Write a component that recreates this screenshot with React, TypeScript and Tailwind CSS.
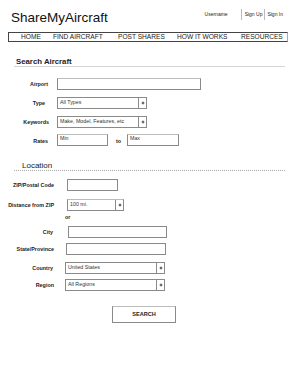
import React from "react";

const Plus = () => (
  <svg width="4" height="4" viewBox="0 0 4 4">
    <path d="M2 0.5V3.5M0.5 2H3.5" stroke="#333" strokeWidth="0.7" />
    <rect x="1.5" y="1.5" width="1" height="1" fill="#111" />
  </svg>
);

function Select({ w, text, extra = "" }: { w: string; text: string; extra?: string }) {
  return (
    <div className={`${w} h-[12px] flex border border-[#8a8a8a] bg-white ${extra}`}>
      <div className="flex-1 flex items-center pl-[2px] text-[5.3px] text-[#333] leading-none">{text}</div>
      <div className="w-[8px] border-l border-[#8a8a8a] flex items-center justify-center">
        <Plus />
      </div>
    </div>
  );
}

function Input({ w, text = "", extra = "" }: { w: string; text?: string; extra?: string }) {
  return (
    <div className={`${w} h-[12px] border border-[#8a8a8a] bg-white flex items-start pt-[1px] pl-[2px] text-[5.3px] text-[#333] leading-none ${extra}`}>
      {text}
    </div>
  );
}

export default function App() {
  return (
    <div className="w-[298px] h-[386px] bg-white overflow-hidden font-['Liberation_Sans',Arial,sans-serif] text-[#222]">
      {/* header */}
      <div className="h-[32px] flex justify-between">
        <div className="pl-[11px] pt-[10px] text-[13.5px] leading-[16px] text-[#111]">ShareMyAircraft</div>
        <div className="flex items-start pt-[9px] pr-[15px] text-[5px] text-[#222]">
          <div className="h-[11px] flex items-center pr-[13px]">Username</div>
          <div className="h-[11px] flex items-center border-l border-[#bbb] pl-[3px] pr-[2px]">Sign Up</div>
          <div className="h-[11px] flex items-center border-l border-[#bbb] pl-[2px]">Sign In</div>
        </div>
      </div>
      {/* nav */}
      <div className="ml-[8px] w-[280px] h-[10px] border border-[#444] border-r-[#aaa] flex items-center text-[6.6px] leading-none text-[#222]">
        <span className="ml-[12px] w-[32px]">HOME</span>
        <span className="w-[65px]">FIND AIRCRAFT</span>
        <span className="w-[59px]">POST SHARES</span>
        <span className="w-[64px]">HOW IT WORKS</span>
        <span>RESOURCES</span>
      </div>

      {/* Search Aircraft */}
      <div className="mt-[15px] ml-[14px] w-[271px] border-b border-[#d4d4d4] pl-[2px] font-bold text-[7.8px] leading-[9px] text-[#222]">
        Search Aircraft
      </div>

      <div className="mt-[11px] flex items-center h-[12px]">
        <div className="w-[48px] text-right font-bold text-[5.4px]">Airport</div>
        <Input w="w-[144px]" extra="ml-[9px] border-t-[#bbb]" />
      </div>
      <div className="mt-[7px] flex items-center h-[12px]">
        <div className="w-[45px] text-right font-bold text-[5.4px]">Type</div>
        <Select w="w-[90px]" text="All Types" extra="ml-[12px]" />
      </div>
      <div className="mt-[7px] flex items-center h-[12px]">
        <div className="w-[49px] text-right font-bold text-[5.4px]">Keywords</div>
        <Select w="w-[90px]" text="Make, Model, Features, etc" extra="ml-[8px]" />
      </div>
      <div className="mt-[6px] flex items-center h-[12px]">
        <div className="w-[48px] text-right font-bold text-[5.4px] pt-[2px]">Rates</div>
        <Input w="w-[51px]" text="Min" extra="ml-[9px] border-t-[#bbb]" />
        <div className="ml-[8px] w-[11px] font-bold text-[5.4px] pt-[2px]">to</div>
        <Input w="w-[52px]" text="Max" extra="border-t-[#bbb]" />
      </div>

      {/* Location */}
      <div className="mt-[15px] ml-[14px] w-[271px] border-b border-dotted border-[#aaa] pl-[8px] text-[8px] leading-[9px] text-[#222]">
        Location
      </div>

      <div className="mt-[8px] flex items-center h-[12px]">
        <div className="w-[54px] text-right font-bold text-[5.4px]">ZIP/Postal Code</div>
        <Input w="w-[51px]" extra="ml-[13px]" />
      </div>
      <div className="mt-[8px] flex items-center h-[12px]">
        <div className="w-[54px] text-right font-bold text-[5.4px]">Distance from ZIP</div>
        <Select w="w-[57px]" text="100 mi." extra="ml-[13px] border-t-[#bbb]" />
      </div>
      <div className="mt-[4px] h-[6px] flex items-center">
        <div className="ml-[65px] font-bold text-[5.4px] leading-none">or</div>
      </div>
      <div className="mt-[5px] flex items-center h-[12px]">
        <div className="w-[53px] text-right font-bold text-[5.4px]">City</div>
        <Input w="w-[99px]" extra="ml-[15px]" />
      </div>
      <div className="mt-[5px] flex items-center h-[12px]">
        <div className="w-[54px] text-right font-bold text-[5.4px]">State/Province</div>
        <Input w="w-[100px]" extra="ml-[12px]" />
      </div>
      <div className="mt-[7px] flex items-center h-[12px]">
        <div className="w-[53px] text-right font-bold text-[5.4px]">Country</div>
        <Select w="w-[100px]" text="United States" extra="ml-[12px]" />
      </div>
      <div className="mt-[5px] flex items-center h-[12px]">
        <div className="w-[54px] text-right font-bold text-[5.4px]">Region</div>
        <Select w="w-[100px]" text="All Regions" extra="ml-[11px]" />
      </div>

      <div className="mt-[15px] ml-[112px] w-[64px] h-[17px] border border-[#8a8a8a] border-t-[#bbb] flex items-center justify-center font-bold text-[5.6px] text-[#222]">
        SEARCH
      </div>
    </div>
  );
}
